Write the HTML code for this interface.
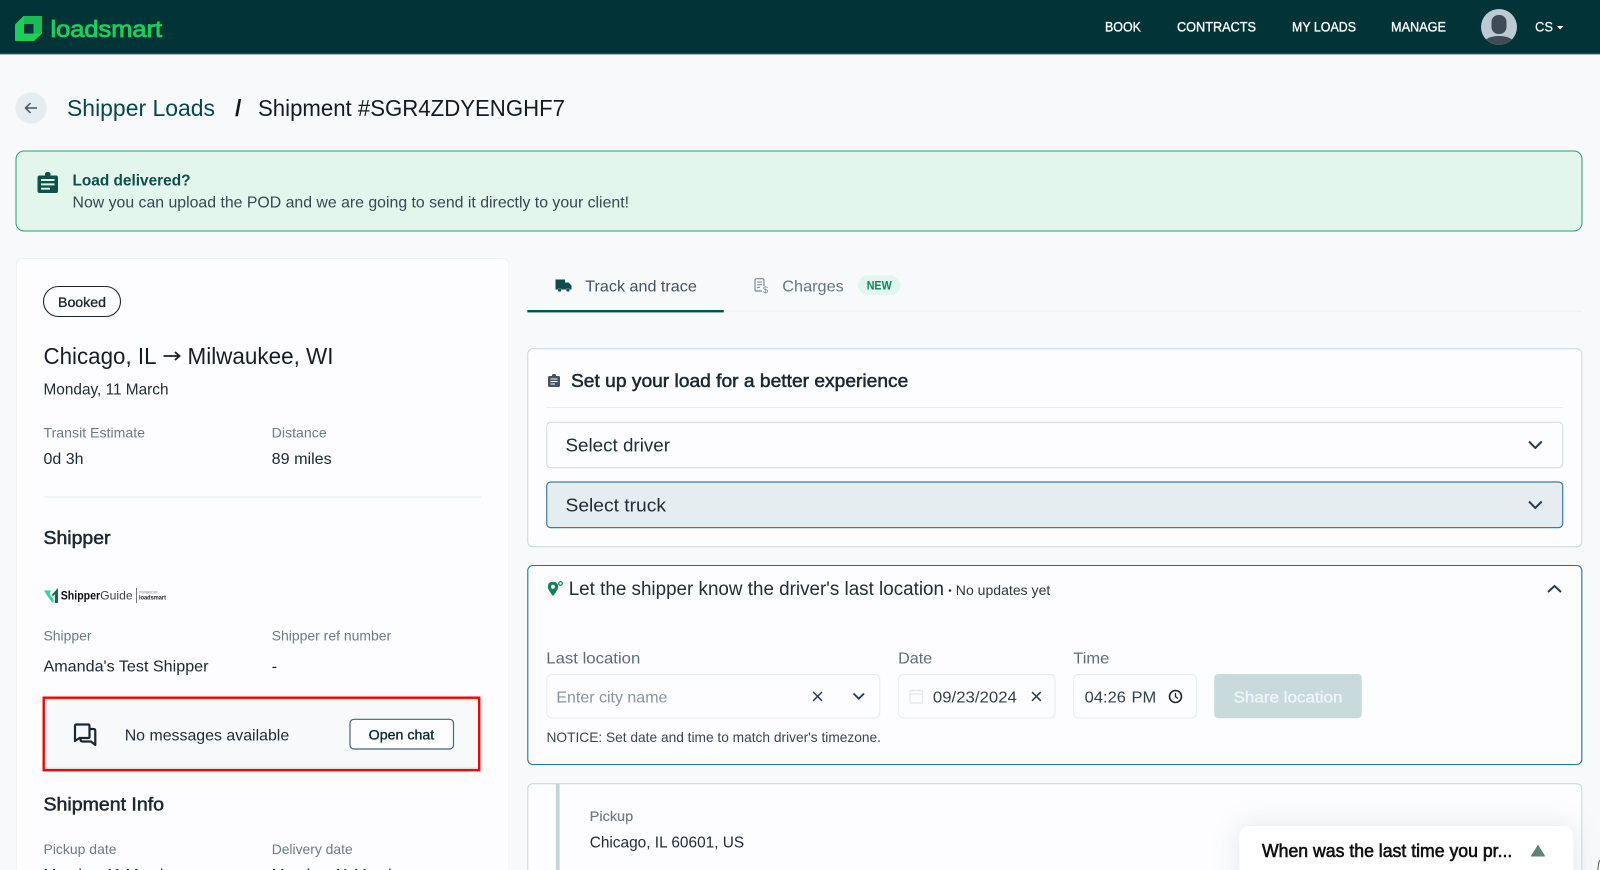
<!DOCTYPE html>
<html lang="en">
<head>
<meta charset="utf-8">
<title>Shipment #SGR4ZDYENGHF7</title>
<style>
html,body{margin:0;padding:0;width:1600px;height:870px;overflow:hidden;background:#f8f9fb}
svg{display:block;filter:blur(.3px)}
text{font-family:"Liberation Sans",Arial,sans-serif;fill:#1c2730;font-size:16px}
.m{stroke:currentColor;stroke-width:.35px}
.s{stroke-width:.5px;stroke:currentColor}
.l{fill:#6c7a86;font-size:14px}
</style>
</head>
<body>
<svg width="1600" height="870" viewBox="0 0 1600 870" xmlns="http://www.w3.org/2000/svg">
<defs>
<filter id="sh" x="-20%" y="-60%" width="140%" height="220%"><feGaussianBlur stdDeviation="14"/></filter>
</defs>
<rect width="1600" height="870" fill="#f8f9fb"/>

<!-- header -->
<rect width="1600" height="54" fill="#023437"/>
<rect y="53.5" width="1600" height="1" fill="#4e6c6e"/>
<path d="M23.5 16H41Q42 16 42 17V33.5L34 41H16Q15 41 15 40V24.5Z" fill="#1ad05a"/>
<path d="M24 16H41Q42 16 42 17V33.5H33.5V24H24Z" fill="#17bd52"/>
<path d="M24 24H33.5V33.5H24Z" fill="#023437"/>
<text x="50.5" y="36.8" textLength="111.5" lengthAdjust="spacingAndGlyphs" style="fill:#1bd05a;font-size:23px;stroke:#1bd05a;stroke-width:.8px">loadsmart</text>
<g style="color:#fff">
<text class="m" x="1105" y="31.6" textLength="36" lengthAdjust="spacingAndGlyphs" style="fill:#fff;font-size:14px">BOOK</text>
<text class="m" x="1177" y="31.6" textLength="79" lengthAdjust="spacingAndGlyphs" style="fill:#fff;font-size:14px">CONTRACTS</text>
<text class="m" x="1292" y="31.6" textLength="64" lengthAdjust="spacingAndGlyphs" style="fill:#fff;font-size:14px">MY LOADS</text>
<text class="m" x="1391" y="31.6" textLength="55" lengthAdjust="spacingAndGlyphs" style="fill:#fff;font-size:14px">MANAGE</text>
<text class="m" x="1535" y="31.6" textLength="18" lengthAdjust="spacingAndGlyphs" style="fill:#fff;font-size:14px;stroke-width:.2px">CS</text>
</g>
<path d="M1557 26H1563.5L1560.2 29.5Z" fill="#fff"/>
<clipPath id="av"><circle cx="1499" cy="27" r="18"/></clipPath>
<circle cx="1499" cy="27" r="18" fill="#bccad4"/>
<g clip-path="url(#av)">
<rect x="1491.5" y="15" width="15" height="19" rx="7" fill="#3f4c58"/>
<path d="M1481 47Q1484 36 1499 36Q1514 36 1517 47Z" fill="#3f4c58"/>
</g>

<!-- breadcrumb -->
<circle cx="31" cy="108" r="15.7" fill="#e6edf0"/>
<path d="M37 108H25.5M30.5 103L25.5 108L30.5 113" fill="none" stroke="#46545f" stroke-width="1.5"/>
<text x="67" y="116" textLength="148" lengthAdjust="spacingAndGlyphs" style="font-size:23px;fill:#07474b">Shipper Loads</text>
<text x="235" y="116" style="font-size:23px;font-weight:700;fill:#10191f">/</text>
<text x="258" y="116" textLength="307" lengthAdjust="spacingAndGlyphs" style="font-size:23px;fill:#141c22">Shipment #SGR4ZDYENGHF7</text>

<!-- banner -->
<rect x="16" y="151" width="1566" height="80" rx="8" fill="#e2f6ed" stroke="#2f9676"/>
<path d="M39.5 175.5H45V174Q45 172 47.7 172Q50.5 172 50.5 174V175.5H56Q58 175.5 58 177.5V191Q58 193 56 193H39.5Q37.5 193 37.5 191V177.5Q37.5 175.5 39.5 175.5Z" fill="#0c5347"/>
<path d="M41 179H54.5V181H41ZM41 183.4H54.5V185.4H41ZM41 187.8H50V189.6H41Z" fill="#e2f6ed"/>
<text x="72.5" y="185.5" textLength="118" lengthAdjust="spacingAndGlyphs" style="fill:#0c4f49;font-weight:700;font-size:16px">Load delivered?</text>
<text x="72.5" y="207.5" textLength="556.5" lengthAdjust="spacingAndGlyphs" style="fill:#39474e;font-size:16px">Now you can upload the POD and we are going to send it directly to your client!</text>

<!-- left card -->
<rect x="16.5" y="258.5" width="492.5" height="640" rx="6" fill="#fdfdff" stroke="#eef1f5"/>
<rect x="43.5" y="286.5" width="77" height="30" rx="15" fill="#fdfdff" stroke="#1c2730" stroke-width="1.1"/>
<text class="m" x="58" y="307" textLength="48" lengthAdjust="spacingAndGlyphs" style="font-size:14px;color:#1c2730">Booked</text>
<text x="43.5" y="364.2" textLength="113" lengthAdjust="spacingAndGlyphs" style="font-size:23px;fill:#161e24">Chicago, IL</text>
<path d="M163.5 356H179M175 352L179.5 356L175 360" fill="none" stroke="#161e24" stroke-width="1.8"/>
<text x="187.5" y="364.2" textLength="146" lengthAdjust="spacingAndGlyphs" style="font-size:23px;fill:#161e24">Milwaukee, WI</text>
<text x="43.5" y="394.6" textLength="125" lengthAdjust="spacingAndGlyphs" style="font-size:16px;fill:#232d35">Monday, 11 March</text>
<text class="l" x="43.5" y="437.3" textLength="101.5" lengthAdjust="spacingAndGlyphs">Transit Estimate</text>
<text class="l" x="271.7" y="437.3" textLength="55" lengthAdjust="spacingAndGlyphs">Distance</text>
<text x="43.5" y="464" textLength="40" lengthAdjust="spacingAndGlyphs">0d 3h</text>
<text x="271.7" y="464" textLength="60" lengthAdjust="spacingAndGlyphs">89 miles</text>
<rect x="43.5" y="496.5" width="438" height="1" fill="#e8edf2"/>
<text class="s" x="43.5" y="544" textLength="67" lengthAdjust="spacingAndGlyphs" style="font-size:18px;color:#1c2730">Shipper</text>

<!-- shipperguide logo -->
<path d="M44 590.5H51L49.5 594L54 600L52.5 603L47.5 596Z" fill="#22dc9a"/>
<path d="M52 594.5L58 588V603H55V594L52.8 596.5Z" fill="#176b45"/>
<text x="60.7" y="599.5" textLength="39.5" lengthAdjust="spacingAndGlyphs" style="font-size:12px;font-weight:700;fill:#111">Shipper</text>
<text x="100.2" y="599.5" textLength="32.5" lengthAdjust="spacingAndGlyphs" style="font-size:12px;fill:#444">Guide</text>
<rect x="136" y="588" width=".8" height="15" fill="#555"/>
<text x="139" y="593.5" textLength="19" lengthAdjust="spacingAndGlyphs" style="font-size:3.5px;fill:#777">POWERED BY</text>
<text x="139" y="599.5" textLength="27" lengthAdjust="spacingAndGlyphs" style="font-size:6px;font-weight:700;fill:#222">loadsmart</text>

<text class="l" x="43.5" y="640.5" textLength="48" lengthAdjust="spacingAndGlyphs">Shipper</text>
<text class="l" x="271.7" y="640.5" textLength="119.5" lengthAdjust="spacingAndGlyphs">Shipper ref number</text>
<text x="43.5" y="671.5" textLength="165" lengthAdjust="spacingAndGlyphs">Amanda's Test Shipper</text>
<text x="271.7" y="671.5" style="font-size:16px">-</text>

<!-- chat box -->
<rect x="43.7" y="697.7" width="435.5" height="72.5" fill="#f7f9fb" stroke="#ff0000" stroke-width="2.4"/>
<rect x="45" y="699" width="433" height="1.2" fill="#d6dee6"/>
<rect x="45" y="767.6" width="433" height="1.4" fill="#d6dee6"/>
<path d="M76.5 724.5H88Q89.5 724.5 89.5 726V736.5Q89.5 738 88 738H79.5L75 741V726Q75 724.5 76.5 724.5Z" fill="none" stroke="#1c2730" stroke-width="2.2" stroke-linejoin="round"/>
<path d="M89.5 729H93.5Q95.3 729 95.3 731V745L91 741.5H82.5Q80.5 741.5 80.5 739.5V738" fill="none" stroke="#1c2730" stroke-width="2.2" stroke-linejoin="round"/>
<text x="124.7" y="740.5" textLength="164.5" lengthAdjust="spacingAndGlyphs" style="fill:#232d35">No messages available</text>
<rect x="350" y="719.3" width="103.5" height="29.7" rx="4" fill="#fdfdff" stroke="#47666a" stroke-width="1.2"/>
<text class="m" x="368.7" y="739.3" textLength="65.5" lengthAdjust="spacingAndGlyphs" style="font-size:14px;fill:#0b2b30;color:#0b2b30">Open chat</text>

<text class="s" x="43.5" y="810.5" textLength="120.5" lengthAdjust="spacingAndGlyphs" style="font-size:18px;color:#1c2730">Shipment Info</text>
<text class="l" x="43.5" y="854" textLength="73" lengthAdjust="spacingAndGlyphs">Pickup date</text>
<text class="l" x="271.7" y="854" textLength="81" lengthAdjust="spacingAndGlyphs">Delivery date</text>
<text x="43.5" y="880" textLength="125" lengthAdjust="spacingAndGlyphs">Monday, 11 March</text>
<text x="271.7" y="880" textLength="125" lengthAdjust="spacingAndGlyphs">Monday, 11 March</text>

<!-- tabs -->
<rect x="527" y="310.5" width="1055" height="1.6" fill="#f0f2f5"/>
<rect x="527.3" y="310" width="196.5" height="2.4" fill="#0b4f50"/>
<path d="M555.5 279.5H565V282.5H568.5L571.5 285.5V289.5H569.8A2 2 0 0 0 566 289.5H561.6A2 2 0 0 0 557.8 289.5H555.5Z" fill="#134a4c"/>
<circle cx="559.7" cy="290" r="1.6" fill="#134a4c"/><circle cx="567.9" cy="290" r="1.6" fill="#134a4c"/>
<text x="585.3" y="291.5" textLength="111.5" lengthAdjust="spacingAndGlyphs" style="fill:#44525c">Track and trace</text>
<path d="M762 291H756.5Q755 291 755 289.5V280Q755 278.7 756.5 278.7H762.5Q764 278.7 764 280V286" fill="none" stroke="#7a8792" stroke-width="1.2"/>
<path d="M757 282H762M757 284.7H762M757 287.4H760" stroke="#7a8792" stroke-width="1"/>
<text x="763" y="293" style="font-size:9px;fill:#7a8792">$</text>
<text x="782.3" y="291.5" textLength="61.5" lengthAdjust="spacingAndGlyphs" style="fill:#667580">Charges</text>
<rect x="858" y="275.5" width="42.5" height="19.5" rx="9.7" fill="#e2f6ed"/>
<text x="866.7" y="289.3" textLength="25" lengthAdjust="spacingAndGlyphs" style="font-size:11.5px;font-weight:700;fill:#12815f">NEW</text>

<!-- setup card -->
<rect x="527.8" y="348.8" width="1054" height="198" rx="5" fill="#fdfdff" stroke="#c9d6e0"/>
<path d="M549.5 376H552V375Q552 374 554 374Q556 374 556 375V376H558.5Q560 376 560 377.5V385.5Q560 387 558.5 387H549.5Q548 387 548 385.5V377.5Q548 376 549.5 376Z" fill="#45535e"/>
<path d="M550.5 379H557.5M550.5 381.5H557.5M550.5 384H555" stroke="#fdfdff" stroke-width="1"/>
<text class="s" x="571" y="387" textLength="337.3" lengthAdjust="spacingAndGlyphs" style="font-size:18px;color:#1c2730">Set up your load for a better experience</text>
<rect x="546" y="407" width="1017" height="1" fill="#e8edf2"/>
<rect x="546.7" y="422.3" width="1016" height="45.4" rx="4" fill="#fdfdff" stroke="#ccd7e0"/>
<text x="565.5" y="451.7" textLength="104.5" lengthAdjust="spacingAndGlyphs" style="font-size:18px;fill:#232d35">Select driver</text>
<path d="M1529 441.5L1535.3 448L1541.7 441.5" fill="none" stroke="#2d3b48" stroke-width="2"/>
<rect x="546.7" y="482" width="1016" height="45.6" rx="4" fill="#e6edf0" stroke="#3d78ad" stroke-width="1.2"/>
<text x="565.5" y="511.7" textLength="100.5" lengthAdjust="spacingAndGlyphs" style="font-size:18px;fill:#232d35">Select truck</text>
<path d="M1529 501.5L1535.3 508L1541.7 501.5" fill="none" stroke="#2d3b48" stroke-width="2"/>

<!-- location card -->
<rect x="527.8" y="565.5" width="1054" height="199" rx="5" fill="#fdfdff" stroke="#1f6fae" stroke-width="1.1"/>
<path d="M553 596Q547.8 590 547.8 586.8Q547.8 581.8 553 581.8Q558.2 581.8 558.2 586.8Q558.2 590 553 596Z" fill="#11805f"/>
<circle cx="553" cy="586.8" r="2" fill="#fdfdff"/>
<circle cx="560.5" cy="583.5" r="1.8" fill="none" stroke="#11805f" stroke-width="1.2"/>
<text x="568.7" y="595" textLength="375.3" lengthAdjust="spacingAndGlyphs" style="font-size:19px;fill:#232d35">Let the shipper know the driver's last location</text>
<circle cx="950" cy="590.5" r="1.3" fill="#232d35"/>
<text x="955.8" y="595" textLength="94.5" lengthAdjust="spacingAndGlyphs" style="font-size:14px;fill:#2c3740">No updates yet</text>
<path d="M1548 592L1554.5 586L1561 592" fill="none" stroke="#2d3b48" stroke-width="2"/>

<text x="546.3" y="663.7" textLength="94" lengthAdjust="spacingAndGlyphs" style="fill:#5f6d78">Last location</text>
<text x="898.2" y="663.7" textLength="34" lengthAdjust="spacingAndGlyphs" style="fill:#5f6d78">Date</text>
<text x="1073.3" y="663.7" textLength="36" lengthAdjust="spacingAndGlyphs" style="fill:#5f6d78">Time</text>

<rect x="546.8" y="674.5" width="333" height="43.5" rx="5" fill="#fdfdff" stroke="#e6ebf0"/>
<text x="556.4" y="702.7" textLength="111" lengthAdjust="spacingAndGlyphs" style="fill:#88949e">Enter city name</text>
<path d="M813.2 692L822 700.8M822 692L813.2 700.8" stroke="#2d3b48" stroke-width="1.5"/>
<path d="M853.5 693.5L858.8 698.7L864 693.5" fill="none" stroke="#2d3b48" stroke-width="1.9"/>

<rect x="898.5" y="674.5" width="156.5" height="43.5" rx="5" fill="#fdfdff" stroke="#e6ebf0"/>
<rect x="910" y="690.5" width="12.5" height="12.5" rx="1" fill="none" stroke="#e3e8ec" stroke-width="1.2"/>
<path d="M910 694H922.5M913 689V691.5M919.5 689V691.5" stroke="#e3e8ec" stroke-width="1.2"/>
<text x="932.9" y="702.7" textLength="84" lengthAdjust="spacingAndGlyphs" style="fill:#333f49">09/23/2024</text>
<path d="M1032 692L1040.8 700.8M1040.8 692L1032 700.8" stroke="#2d3b48" stroke-width="1.5"/>

<rect x="1073.5" y="674.5" width="123" height="43.5" rx="5" fill="#fdfdff" stroke="#e6ebf0"/>
<text x="1084.7" y="702.7" textLength="71.5" lengthAdjust="spacingAndGlyphs" style="fill:#333f49;word-spacing:1px">04:26 PM</text>
<circle cx="1175.5" cy="696.5" r="6" fill="none" stroke="#1c2730" stroke-width="1.6"/>
<path d="M1175.5 693V696.8L1178 698.4" fill="none" stroke="#1c2730" stroke-width="1.3"/>

<rect x="1214.3" y="674" width="147.4" height="44.3" rx="4" fill="#c9dadc"/>
<text class="m" x="1233.5" y="702.7" textLength="109" lengthAdjust="spacingAndGlyphs" style="fill:#eef6f6;color:#eef6f6">Share location</text>
<text x="546.5" y="742" textLength="334.5" lengthAdjust="spacingAndGlyphs" style="font-size:14px;fill:#3a4650">NOTICE: Set date and time to match driver's timezone.</text>

<!-- pickup card -->
<rect x="527.8" y="783.8" width="1054" height="120" rx="5" fill="#fdfdff" stroke="#c9d6e0"/>
<rect x="556" y="784" width="3.6" height="90" fill="#c2d2de"/>
<text class="m" x="589.7" y="821" textLength="43.5" lengthAdjust="spacingAndGlyphs" style="font-size:14px;fill:#6c7a86;color:#6c7a86;stroke-width:.15px">Pickup</text>
<text x="589.7" y="847.5" textLength="154.5" lengthAdjust="spacingAndGlyphs" style="fill:#232d35">Chicago, IL 60601, US</text>

<!-- survey -->
<rect x="1239" y="826" width="334.5" height="80" rx="10" fill="#8a97a3" opacity=".22" filter="url(#sh)"/>
<rect x="1239.3" y="826" width="334" height="80" rx="10" fill="#ffffff"/>
<text class="s" x="1262" y="857" textLength="250.3" lengthAdjust="spacingAndGlyphs" style="font-size:18px;fill:#111;color:#111;stroke-width:.6px">When was the last time you pr...</text>
<path d="M1538 845.5L1544.5 856H1531.5Z" fill="#5c8270" stroke="#5c8270" stroke-linejoin="round"/>
<path d="M1600 860Q1598 863 1598 870" fill="none" stroke="#555" stroke-width="1"/>
</svg>
</body>
</html>
